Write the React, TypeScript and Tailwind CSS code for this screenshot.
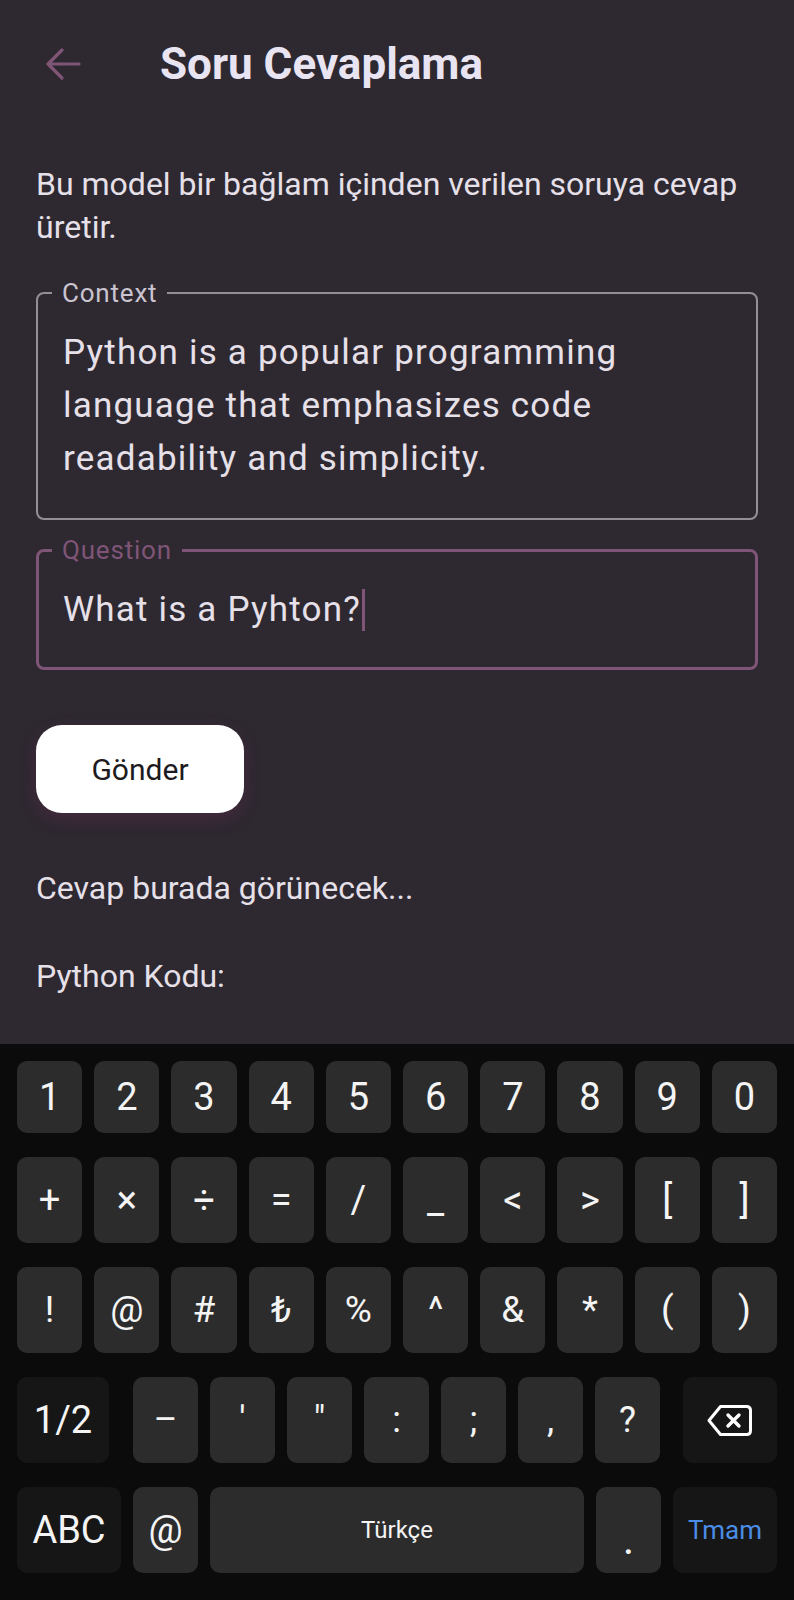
import React from "react";

const row1 = ["1", "2", "3", "4", "5", "6", "7", "8", "9", "0"];
const row2 = ["+", "×", "÷", "=", "/", "_", "<", ">", "[", "]"];
const row3 = ["!", "@", "#", "₺", "%", "^", "&", "*", "(", ")"];
const row4 = ["–", "'", "\"", ":", ";", ",", "?"];

function BackIcon() {
  return (
    <svg width="36" height="36" viewBox="0 0 36 36" fill="none">
      <path
        d="M34 18H3M17 4L3 18L17 32"
        stroke="#7f5577"
        strokeWidth="3.2"
        strokeLinecap="round"
        strokeLinejoin="round"
      />
    </svg>
  );
}

function BackspaceIcon() {
  return (
    <svg width="46" height="33" viewBox="0 0 46 33" fill="none">
      <path
        d="M2 16.5L13.5 2.5H39.5Q43.5 2.5 43.5 6.5V26.5Q43.5 30.5 39.5 30.5H13.5Z"
        stroke="white"
        strokeWidth="3"
        strokeLinejoin="round"
      />
      <path
        d="M21 11L32 22M32 11L21 22"
        stroke="white"
        strokeWidth="3.4"
        strokeLinecap="round"
      />
    </svg>
  );
}

function Key({ label, className = "" }: { label: React.ReactNode; className?: string }) {
  return (
    <div
      className={`flex items-center justify-center rounded-[10px] bg-[#2c2c2c] text-[#f4f4f4] ${className}`}
    >
      {label}
    </div>
  );
}

export default function App() {
  return (
    <div className="w-[794px] h-[1600px] bg-[#2e2831] flex flex-col overflow-hidden font-['Roboto',sans-serif]">
      <div className="flex-1">
        {/* App bar */}
        <div className="h-[128px] flex items-center pl-[45px]">
          <BackIcon />
          <h1 className="ml-[79px] text-[44px] font-bold text-[#e9e4f1] leading-none">
            Soru Cevaplama
          </h1>
        </div>

        <div className="px-[36px]">
          <p className="mt-[35px] text-[32px] leading-[43px] text-[#e6e0e9]">
            Bu model bir bağlam içinden verilen soruya cevap üretir.
          </p>

          {/* Context field */}
          <fieldset className="mt-[29px] border-2 border-[#938f99] rounded-[8px] px-[14px] pt-[18px] pb-[33px]">
            <legend className="px-[10px] text-[26px] leading-[30px] tracking-[0.8px] text-[#cac4d0]">
              Context
            </legend>
            <div className="px-[11px] text-[35px] leading-[53px] tracking-[1.2px] text-[#e6e0e9]">
              Python is a popular programming language that emphasizes code readability and simplicity.
            </div>
          </fieldset>

          {/* Question field */}
          <fieldset className="mt-[15px] border-[3px] border-[#7f5577] rounded-[8px] px-[13px] pt-[18px] pb-[31px]">
            <legend className="px-[10px] text-[26px] leading-[30px] tracking-[0.8px] text-[#7f5577]">
              Question
            </legend>
            <div className="px-[11px] text-[35px] leading-[53px] tracking-[1.2px] text-[#e6e0e9] flex items-center">
              <span>What is a Pyhton?</span>
              <span className="inline-block w-[3px] h-[42px] bg-[#7f5577] ml-[1px]" />
            </div>
          </fieldset>

          <button className="mt-[55px] w-[208px] h-[88px] rounded-[26px] bg-white text-[#1d1b20] text-[30px] font-normal shadow-[0_6px_16px_rgba(110,45,80,0.35)]">
            Gönder
          </button>

          <p className="mt-[54px] text-[32px] leading-[43px] text-[#e6e0e9]">
            Cevap burada görünecek...
          </p>
          <p className="mt-[45px] text-[32px] leading-[43px] text-[#e6e0e9]">
            Python Kodu:
          </p>
        </div>
      </div>

      {/* Keyboard */}
      <div className="h-[556px] bg-[#0b0b0b] px-[17px] pt-[17px] flex flex-col gap-[24px]">
        <div className="flex gap-[12px] h-[72px]">
          {row1.map((k) => (
            <Key key={k} label={k} className="flex-1 text-[38px]" />
          ))}
        </div>
        <div className="flex gap-[12px] h-[86px]">
          {row2.map((k) => (
            <Key key={k} label={k} className="flex-1 text-[38px]" />
          ))}
        </div>
        <div className="flex gap-[12px] h-[86px]">
          {row3.map((k) => (
            <Key key={k} label={k} className="flex-1 text-[37px]" />
          ))}
        </div>
        <div className="flex gap-[12px] h-[86px]">
          <Key label="1/2" className="w-[92px] mr-[12px] bg-[#161616] text-[38px]" />
          {row4.map((k) => (
            <Key key={k} label={k} className="w-[65px] text-[36px]" />
          ))}
          <Key label={<BackspaceIcon />} className="flex-1 ml-[11px] bg-[#161616]" />
        </div>
        <div className="flex gap-[12px] h-[86px]">
          <Key label="ABC" className="w-[104px] bg-[#161616] text-[38px]" />
          <Key label="@" className="w-[65px] text-[38px]" />
          <Key label="Türkçe" className="flex-1 text-[24px] text-[#e2e2e2]" />
          <Key label="." className="w-[65px] pt-[18px] text-[44px]" />
          <Key label="Tmam" className="w-[104px] bg-[#161616] text-[26px] !text-[#4b8de6]" />
        </div>
      </div>
    </div>
  );
}
